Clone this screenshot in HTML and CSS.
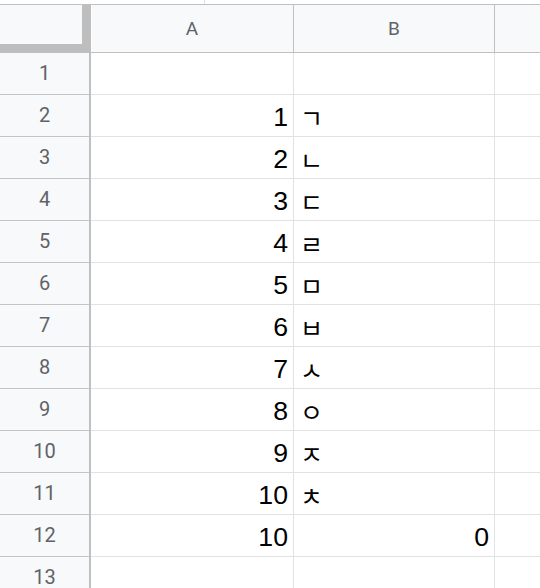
FILE: index.html
```html
<!DOCTYPE html>
<html lang="ko">
<head>
<meta charset="utf-8">
<title>Sheet</title>
<link rel="stylesheet" href="styles.css">
</head>
<body>
<div class="topbar"><div class="topbar-seg"></div></div>
<div class="sheet">
  <div class="corner"></div>
  <div class="colhead first">A</div>
  <div class="colhead">B</div>
  <div class="colhead last"></div>

  <div class="rowhead">1</div><div class="cell num"></div><div class="cell txt"></div><div class="cell last"></div>
  <div class="rowhead">2</div><div class="cell num">1</div><div class="cell txt">ㄱ</div><div class="cell last"></div>
  <div class="rowhead">3</div><div class="cell num">2</div><div class="cell txt">ㄴ</div><div class="cell last"></div>
  <div class="rowhead">4</div><div class="cell num">3</div><div class="cell txt">ㄷ</div><div class="cell last"></div>
  <div class="rowhead">5</div><div class="cell num">4</div><div class="cell txt">ㄹ</div><div class="cell last"></div>
  <div class="rowhead">6</div><div class="cell num">5</div><div class="cell txt">ㅁ</div><div class="cell last"></div>
  <div class="rowhead">7</div><div class="cell num">6</div><div class="cell txt">ㅂ</div><div class="cell last"></div>
  <div class="rowhead">8</div><div class="cell num">7</div><div class="cell txt">ㅅ</div><div class="cell last"></div>
  <div class="rowhead">9</div><div class="cell num">8</div><div class="cell txt">ㅇ</div><div class="cell last"></div>
  <div class="rowhead">10</div><div class="cell num">9</div><div class="cell txt">ㅈ</div><div class="cell last"></div>
  <div class="rowhead">11</div><div class="cell num">10</div><div class="cell txt">ㅊ</div><div class="cell last"></div>
  <div class="rowhead">12</div><div class="cell num">10</div><div class="cell num">0</div><div class="cell last"></div>
  <div class="rowhead">13</div><div class="cell num"></div><div class="cell txt"></div><div class="cell last"></div>
</div>
</body>
</html>
```
FILE: styles.css
```css
* { box-sizing: border-box; }
html, body {
  margin: 0;
  padding: 0;
  background: #fff;
  overflow: hidden;
  height: 588px;
}
.topbar {
  height: 4px;
  display: flex;
}
.topbar-seg {
  width: 205px;
  border-right: 1px solid #e0e0e0;
}
.sheet {
  display: grid;
  grid-template-columns: 91px 203px 201px 1fr;
  grid-template-rows: 48px;
  grid-auto-rows: 42px;
  border-top: 1px solid #c0c0c0;
}
.corner {
  background: #f8f9fa;
  border-right: 9px solid #bebebe;
  border-bottom: 9px solid #bebebe;
}
.colhead {
  background: #f8f9fa;
  border-right: 1px solid #c0c0c0;
  border-bottom: 1px solid #c0c0c0;
  display: flex;
  align-items: center;
  justify-content: center;
  font-family: Roboto, "Liberation Sans", sans-serif;
  font-size: 19px;
  color: #5f6368;
}
.colhead.first { box-shadow: inset 1px 0 0 #fff; }
.colhead.last { border-right: none; }
.rowhead {
  background: #f8f9fa;
  border-right: 2px solid #c0c0c0;
  border-bottom: 1px solid #c4c4c4;
  display: flex;
  align-items: center;
  justify-content: center;
  font-family: Roboto, "Liberation Sans", sans-serif;
  font-size: 20px;
  color: #5f6368;
  padding-bottom: 1px;
}
.cell {
  border-right: 1px solid #e2e2e2;
  border-bottom: 1px solid #e2e2e2;
  display: flex;
  align-items: flex-end;
  font-family: "Liberation Sans", Arial, "Noto Sans CJK KR", sans-serif;
  font-size: 26.67px;
  line-height: 1;
  color: #000;
  padding: 0 5px 5px 6px;
}
.cell.num { justify-content: flex-end; }
.cell.txt {
  justify-content: flex-start;
  font-family: "Noto Sans CJK KR", sans-serif;
  font-size: 25px;
  font-weight: 400;
  padding-left: 6px;
  padding-bottom: 6px;
}
.cell.last { border-right: none; }
```
